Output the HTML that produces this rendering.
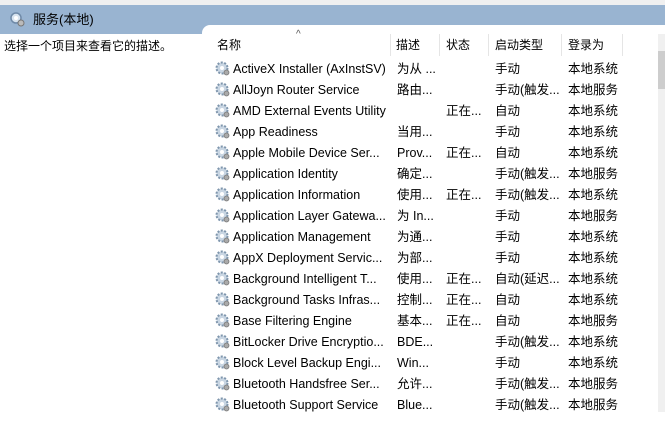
<!DOCTYPE html>
<html><head><meta charset="utf-8"><style>
body{margin:0;width:665px;height:412px;overflow:hidden;background:#fff;position:relative;font-family:"Liberation Sans","Noto Sans CJK SC",sans-serif;font-size:12.5px;color:#000}
.top{position:absolute;left:0;top:0;width:665px;height:5px;background:#f0f0f0}
.band{position:absolute;left:0;top:5px;width:665px;height:29px;background:#99b4d1}
.title{position:absolute;left:33px;top:12px;font-size:13px;line-height:16px}
.desc{position:absolute;left:4px;top:39px;font-size:12px;line-height:15px}
.panel{position:absolute;left:202px;top:25px;width:463px;height:400px;background:#fff;border-top-left-radius:8px}
.hd{position:absolute;top:38px;font-size:12px;line-height:15px}
.sep{position:absolute;top:34px;width:1px;height:22px;background:#e5e5e5}
.row{position:absolute;left:0;height:21px;width:660px;white-space:nowrap}
.row span{position:absolute;top:4px;line-height:15px;height:15px}
.ic{position:absolute;left:214px;top:2px}
.sb{position:absolute;left:658px;top:34px;width:7px;height:378px;background:#f0f0f0}
.th{position:absolute;left:658px;top:51px;width:7px;height:38px;background:#cdcdcd}
</style></head><body>
<div class="top"></div><div class="band"></div>
<svg style="position:absolute;left:9px;top:11px" width="16" height="16" viewBox="0 0 16 16"><circle cx="7" cy="7" r="5" fill="#d8e4f0" stroke="#6f8aa8" stroke-width="1.5"/><circle cx="7" cy="7" r="2" fill="#fff"/><circle cx="12" cy="12" r="3" fill="#bbb" stroke="#777"/></svg>
<div class="title">服务(本地)</div>
<div class="desc">选择一个项目来查看它的描述。</div>
<div class="panel"></div>
<div style="position:absolute;left:296px;top:29px;font-size:10px;color:#555">^</div>
<div class="hd" style="left:217px">名称</div>
<div class="hd" style="left:396px">描述</div>
<div class="hd" style="left:446px">状态</div>
<div class="hd" style="left:495px">启动类型</div>
<div class="hd" style="left:568px">登录为</div>
<div class="sep" style="left:390px"></div><div class="sep" style="left:439px"></div><div class="sep" style="left:488px"></div><div class="sep" style="left:561px"></div><div class="sep" style="left:622px"></div>
<div class="sb"></div><div class="th"></div>
<div id="rows"></div>
<script>
var d=[["ActiveX Installer (AxInstSV)","为从 ...","","手动","本地系统"],
["AllJoyn Router Service","路由...","","手动(触发...","本地服务"],
["AMD External Events Utility","","正在...","自动","本地系统"],
["App Readiness","当用...","","手动","本地系统"],
["Apple Mobile Device Ser...","Prov...","正在...","自动","本地系统"],
["Application Identity","确定...","","手动(触发...","本地服务"],
["Application Information","使用...","正在...","手动(触发...","本地系统"],
["Application Layer Gatewa...","为 In...","","手动","本地服务"],
["Application Management","为通...","","手动","本地系统"],
["AppX Deployment Servic...","为部...","","手动","本地系统"],
["Background Intelligent T...","使用...","正在...","自动(延迟...","本地系统"],
["Background Tasks Infras...","控制...","正在...","自动","本地系统"],
["Base Filtering Engine","基本...","正在...","自动","本地服务"],
["BitLocker Drive Encryptio...","BDE...","","手动(触发...","本地系统"],
["Block Level Backup Engi...","Win...","","手动","本地系统"],
["Bluetooth Handsfree Ser...","允许...","","手动(触发...","本地服务"],
["Bluetooth Support Service","Blue...","","手动(触发...","本地服务"]];
var x=[233,397,446,495,568],h="";
d.forEach(function(r,i){h+='<div class="row" style="top:'+(58+i*21)+'px"><svg class="ic" width="16" height="16" viewBox="0 0 16 16"><circle cx="8" cy="8" r="5.5" fill="#c9d6e3" stroke="#7f96ad" stroke-width="2" stroke-dasharray="2 1.5"/><circle cx="8" cy="8" r="2" fill="#fff"/><circle cx="12.5" cy="12.5" r="2.5" fill="#aaa" stroke="#777" stroke-width=".8"/></svg>';
r.forEach(function(t,j){h+='<span style="left:'+x[j]+'px">'+t+'</span>'});h+='</div>'});
document.getElementById('rows').innerHTML=h;
</script>
</body></html>
